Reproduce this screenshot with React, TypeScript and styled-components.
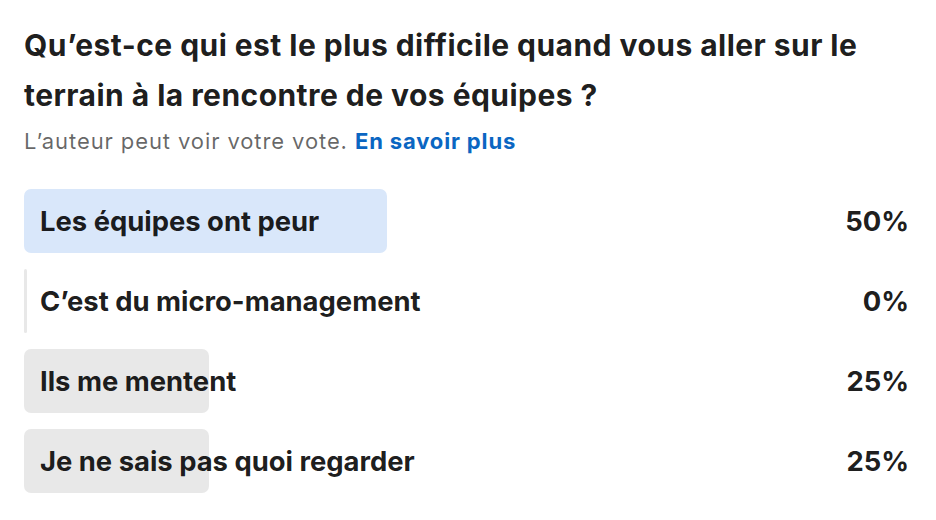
import * as React from 'react';
import styled, { createGlobalStyle } from 'styled-components';

const GlobalStyle = createGlobalStyle`
  body {
    margin: 0;
    background: #ffffff;
    font-family: Inter, "Liberation Sans", sans-serif;
  }
`;

const Container = styled.div`
  display: flex;
  flex-direction: column;
  padding: 20px 27px 0 24px;
  width: 936px;
  box-sizing: border-box;
`;

const Question = styled.h1`
  margin: 0;
  font-size: 30px;
  line-height: 50px;
  letter-spacing: 0.45px;
  font-weight: 700;
  color: rgba(0, 0, 0, 0.9);
`;

const Notice = styled.p`
  margin: 7px 0 34px 0;
  font-size: 22px;
  line-height: 28px;
  letter-spacing: 0.9px;
  color: rgba(0, 0, 0, 0.6);
`;

const Link = styled.a`
  color: #0a66c2;
  font-weight: 700;
  letter-spacing: 0.85px;
  text-decoration: none;
`;

const OptionList = styled.div`
  display: flex;
  flex-direction: column;
  gap: 16px;
`;

const OptionRow = styled.div`
  position: relative;
  display: flex;
  align-items: center;
  justify-content: space-between;
  height: 64px;
`;

const Bar = styled.div<{ $selected?: boolean }>`
  position: absolute;
  left: 0;
  top: 0;
  bottom: 0;
  min-width: 3px;
  border-radius: 7px;
  background: ${(p) => (p.$selected ? '#d9e7fa' : '#e8e8e8')};
`;

const OptionText = styled.span`
  position: relative;
  padding-left: 16px;
  font-size: 27.4px;
  font-weight: 700;
  color: rgba(0, 0, 0, 0.9);
`;

const Percent = styled.span`
  position: relative;
  font-size: 27.4px;
  font-weight: 700;
  color: rgba(0, 0, 0, 0.9);
`;

const options = [
  { label: 'Les équipes ont peur', pct: 50, selected: true },
  { label: 'C’est du micro-management', pct: 0 },
  { label: 'Ils me mentent', pct: 25 },
  { label: 'Je ne sais pas quoi regarder', pct: 25 },
];

const barWidth = (pct: number) => (pct === 0 ? 3 : 7.12 * pct + 7);

const App: React.FC = () => {
  return (
    <>
      <GlobalStyle />
      <Container>
        <Question>
          Qu’est-ce qui est le plus difficile quand vous aller sur le terrain à la rencontre de vos équipes ?
        </Question>
        <Notice>
          L’auteur peut voir votre vote. <Link href="#">En savoir plus</Link>
        </Notice>
        <OptionList>
          {options.map((o) => (
            <OptionRow key={o.label}>
              <Bar $selected={o.selected} style={{ width: barWidth(o.pct) }} />
              <OptionText>{o.label}</OptionText>
              <Percent>{o.pct}%</Percent>
            </OptionRow>
          ))}
        </OptionList>
      </Container>
    </>
  );
};

export default App;
